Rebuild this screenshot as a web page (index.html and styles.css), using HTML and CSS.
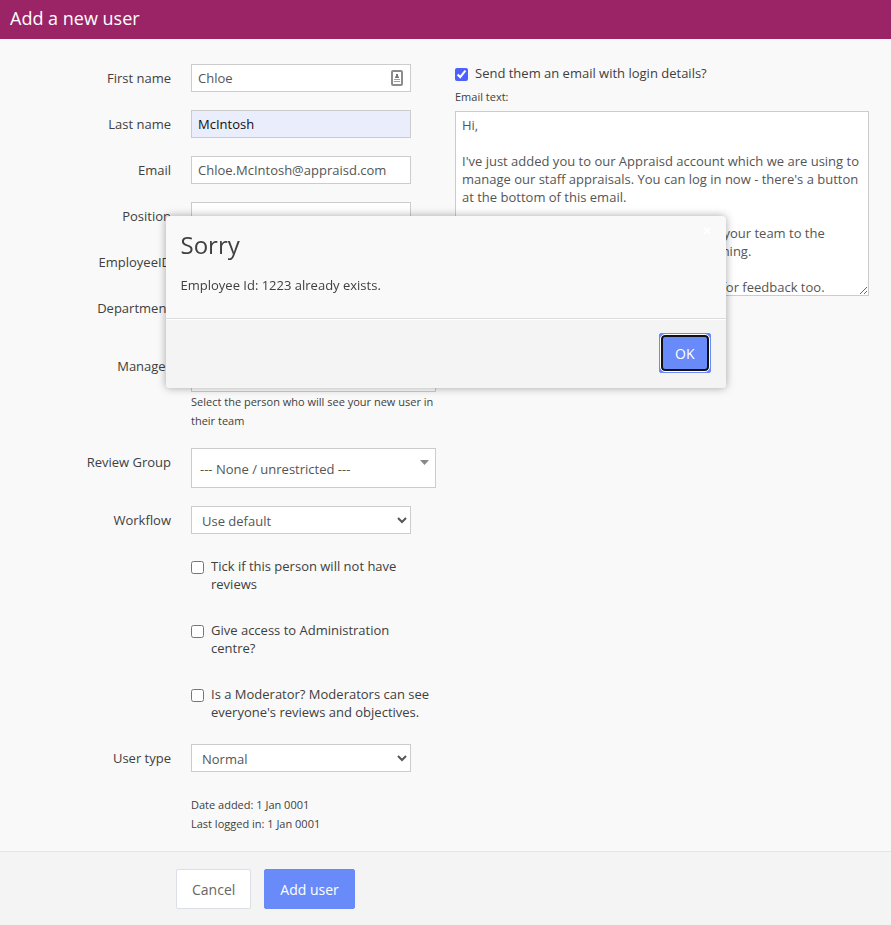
FILE: index.html
```
<!DOCTYPE html>
<html lang="en">
<head>
  <meta charset="UTF-8">
  <meta name="viewport" content="width=device-width, initial-scale=1.0">
  <title>Add a new user</title>
  <link rel="stylesheet" href="styles.css">
</head>
<body>
  <header class="page-header">
    <h1>Add a new user</h1>
  </header>

  <form class="user-form">
    <div class="form-body">
      <div class="details">
        <div class="row">
          <label for="firstName">First name</label>
          <div class="controls with-icon">
            <input type="text" id="firstName" value="Chloe">
            <svg class="contact-icon" width="12" height="16" viewBox="0 0 12 16" aria-hidden="true">
              <rect x="1" y="1" width="10" height="14" rx="1" fill="#fff" stroke="#8c8c8c" stroke-width="2"/>
              <path d="M5 4h2v2l1 1v1H4V7l1-1z" fill="#777"/>
              <path d="M3 9h6v1H3zM3 11h6v1H3z" fill="#a0a0a0"/>
            </svg>
          </div>
        </div>
        <div class="row">
          <label for="lastName">Last name</label>
          <div class="controls"><input type="text" id="lastName" class="autofilled" value="McIntosh"></div>
        </div>
        <div class="row">
          <label for="email">Email</label>
          <div class="controls"><input type="text" id="email" value="Chloe.McIntosh@appraisd.com"></div>
        </div>
        <div class="row">
          <label for="position">Position</label>
          <div class="controls"><input type="text" id="position"></div>
        </div>
        <div class="row">
          <label for="employeeId">EmployeeID</label>
          <div class="controls"><input type="text" id="employeeId" value="1223"></div>
        </div>
        <div class="row">
          <label for="department">Department</label>
          <div class="controls">
            <div class="combo">
              <select id="department"><option></option></select>
            </div>
          </div>
        </div>
        <div class="row">
          <label for="manager">Manager</label>
          <div class="controls">
            <div class="combo">
              <select id="manager"><option></option></select>
            </div>
            <p class="help">Select the person who will see your new user in their team</p>
          </div>
        </div>
        <div class="row">
          <label for="reviewGroup">Review Group</label>
          <div class="controls">
            <div class="combo">
              <select id="reviewGroup"><option>--- None / unrestricted ---</option></select>
              <svg class="combo-arrow" width="9" height="5" viewBox="0 0 9 5" aria-hidden="true"><path d="M0 0h9L4.5 5z" fill="#888"/></svg>
            </div>
          </div>
        </div>
        <div class="row">
          <label for="workflow">Workflow</label>
          <div class="controls"><select id="workflow" class="plain"><option>Use default</option></select></div>
        </div>
        <div class="row">
          <div class="controls inset">
            <label class="check"><input type="checkbox"><span>Tick if this person will not have reviews</span></label>
          </div>
        </div>
        <div class="row">
          <div class="controls inset">
            <label class="check"><input type="checkbox"><span>Give access to Administration centre?</span></label>
          </div>
        </div>
        <div class="row">
          <div class="controls inset">
            <label class="check"><input type="checkbox"><span>Is a Moderator? Moderators can see everyone's reviews and objectives.</span></label>
          </div>
        </div>
        <div class="row">
          <label for="userType">User type</label>
          <div class="controls"><select id="userType" class="plain"><option>Normal</option></select></div>
        </div>
        <div class="row">
          <div class="controls dates">
            <p class="help">Date added: 1 Jan 0001</p>
            <p class="help">Last logged in: 1 Jan 0001</p>
          </div>
        </div>
      </div>

      <div class="invite">
        <label class="check"><input type="checkbox" checked><span>Send them an email with login details?</span></label>
        <label class="email-label" for="emailText">Email text:</label>
        <textarea id="emailText">Hi,

I've just added you to our Appraisd account which we are using to
manage our staff appraisals. You can log in now - there's a button
at the bottom of this email.

Please add your objectives, and bring all of your team to the
portal, so that we can all see what is happening.

You can use it to ask your team colleagues for feedback too.</textarea>
      </div>
    </div>

    <div class="form-actions">
      <button type="button" class="btn">Cancel</button>
      <button type="submit" class="btn btn-primary">Add user</button>
    </div>
  </form>

  <div class="modal" role="dialog" aria-labelledby="modalTitle">
    <button type="button" class="close" aria-label="Close">
      <svg width="8" height="8" viewBox="0 0 8 8"><path d="M1 1l6 6M7 1L1 7" stroke="#fff" stroke-width="2"/></svg>
    </button>
    <div class="modal-body">
      <h2 id="modalTitle">Sorry</h2>
      <p>Employee Id: 1223 already exists.</p>
    </div>
    <div class="modal-footer">
      <button type="button" class="btn btn-primary btn-ok">OK</button>
    </div>
  </div>
</body>
</html>
```
FILE: styles.css
```
* {
  box-sizing: border-box;
}

body {
  margin: 0;
  min-height: 100vh;
  background: #f4f4f4;
  color: #404040;
  font-family: "Open Sans", Arial, sans-serif;
  font-size: 13px;
  line-height: 18px;
}

h1, h2, p {
  margin: 0;
}

input, select, textarea, button {
  margin: 0;
  font-family: inherit;
  font-size: 13px;
  line-height: 18px;
}

.page-header {
  padding: 6px 10px 9px;
  background: #9b2467;
  color: #fff;
}

.page-header h1 {
  font-size: 18px;
  font-weight: 400;
  line-height: 24px;
}

/* form */
.form-body {
  display: grid;
  grid-template-columns: 426px 1fr;
  gap: 19px;
  padding: 25px 22px 18px 10px;
  background: #f9f9f9;
}

.details {
  display: flex;
  flex-direction: column;
  gap: 18px;
}

.row {
  display: flex;
  gap: 20px;
  justify-content: flex-end;
}

.row > label {
  flex: 1;
  padding-top: 5px;
  text-align: right;
}

.controls {
  width: 245px;
}

.inset {
  padding: 5px 0;
}

.dates {
  padding-top: 5px;
}

.help {
  font-size: 11px;
  line-height: 19px;
}

input[type="text"],
select,
textarea {
  display: block;
  border: 1px solid #ccc;
  border-radius: 0;
  background-color: #fff;
  color: #555;
}

input[type="text"] {
  width: 220px;
  height: 28px;
  padding: 4px 6px;
}

input[type="text"].autofilled {
  background-color: #e9edfc;
  color: #111;
}

.with-icon {
  position: relative;
}

.contact-icon {
  position: absolute;
  top: 6px;
  left: 200px;
}

select.plain {
  width: 220px;
  height: 28px;
  padding: 4px 6px;
}

.combo {
  position: relative;
}

.combo select {
  width: 100%;
  height: 40px;
  padding: 2px 8px 0;
  appearance: none;
}

.combo-arrow {
  position: absolute;
  top: 12px;
  right: 7px;
}

.check {
  display: flex;
  align-items: flex-start;
  gap: 7px;
}

.check input {
  flex: none;
  width: 13px;
  height: 13px;
  margin: 4px 0 0;
  accent-color: #4d61fc;
}

.email-label {
  display: block;
  margin: 6px 0 5px;
  font-size: 11px;
}

.invite textarea {
  width: 100%;
  height: 185px;
  padding: 4px 6px;
  overflow: hidden;
  resize: both;
}

.form-actions {
  display: flex;
  gap: 13px;
  padding: 17px 176px 16px;
  border-top: 1px solid #e5e5e5;
  background: #f4f4f4;
}

.btn {
  height: 40px;
  padding: 2px 15px 0;
  border: 1px solid #dcdfe8;
  border-radius: 2px;
  background: #fff;
  color: #666;
  font-size: 14px;
  white-space: nowrap;
}

.btn-primary {
  border-color: #698bfa;
  background: #698bfa;
  color: #fff;
  font-weight: 500;
}

/* alert */
.modal {
  position: fixed;
  top: 216px;
  left: 50%;
  width: 560px;
  max-width: 100%;
  transform: translateX(-50%);
  border-radius: 4px;
  background: #f9f9f9;
  box-shadow: 0 0 8px rgba(0, 0, 0, 0.35);
}

.close {
  position: absolute;
  top: 10px;
  right: 14px;
  display: flex;
  padding: 1px;
  border: 0;
  background: none;
}

.modal-body {
  padding: 14px 15px 24px;
}

.modal-body h2 {
  margin-bottom: 16px;
  font-size: 24px;
  font-weight: 400;
  line-height: 30px;
}

.modal-footer {
  display: flex;
  justify-content: flex-end;
  padding: 14px 15px 15px;
  border-top: 1px solid #ddd;
  border-radius: 0 0 4px 4px;
  background: #f4f4f4;
  box-shadow: inset 0 1px 0 #fff;
}

.btn-ok {
  position: relative;
}

.btn-ok::before {
  content: "";
  position: absolute;
  inset: 1px;
  border: 2px solid #111;
  border-radius: 4px;
  outline: 1px solid #fff;
}
```
